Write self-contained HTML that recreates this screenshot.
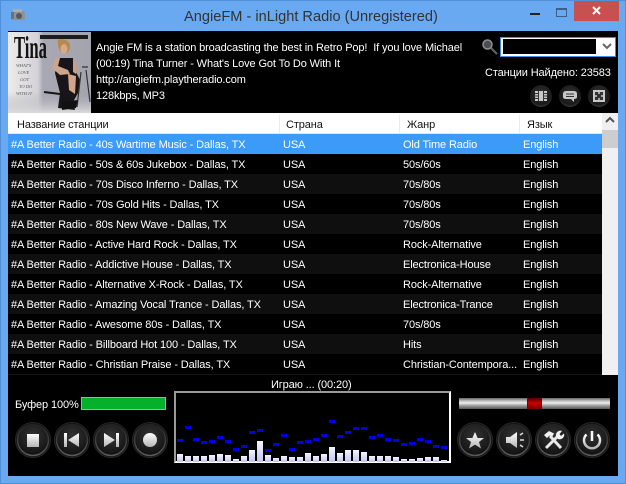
<!DOCTYPE html>
<html><head><meta charset="utf-8"><style>
html,body{margin:0;padding:0;background:#69a9f2}
body{width:626px;height:484px;position:relative;overflow:hidden;font:11px/16px "Liberation Sans","Noto Sans CJK SC",sans-serif;letter-spacing:-.12px;color:#fff}
.a{position:absolute;white-space:nowrap}
#win{left:0;top:0;width:624px;height:482px;border:1px solid #4f8fd8;background:#69a9f2}
#in{left:8px;top:31px;width:610px;height:445px;background:#000}
.r{position:absolute;left:8px;width:594px;height:20px;line-height:22px;color:#fff}
.r span{position:absolute;top:0;white-space:nowrap}
.r span:nth-child(1){left:3px}.r span:nth-child(2){left:275px}.r span:nth-child(3){left:395px}.r span:nth-child(4){left:515px}
.g{background:#0f0f0f}
.h{top:115px;height:18px;line-height:20px;color:#111}
.s{top:115px;width:1px;height:18px;background:#e3ebf3}
svg{position:absolute;overflow:visible}
</style></head><body>
<div class="a" id="win"></div>
<div class="a" id="in"></div>

<svg style="left:10px;top:8px" width="16" height="14" viewBox="0 0 16 14"><rect x="1" y="3" width="14" height="9" rx="2" fill="#8d9298"/><rect x="3" y="1" width="9" height="3" fill="#a8adb3"/><circle cx="9" cy="8" r="3" fill="#55595e"/><rect x="1" y="4" width="3" height="7" fill="#6d7277"/></svg>
<div class="a" style="left:184px;top:6px;font-size:14.6px;line-height:22px;color:#333;letter-spacing:0">AngieFM - inLight Radio (Unregistered)</div>
<div class="a" style="left:530px;top:13px;width:10px;height:2px;background:#222"></div>
<div class="a" style="left:556px;top:8px;width:9px;height:6px;border:1px solid #3d5f8c;border-top-width:2px"></div>
<div class="a" style="left:574px;top:1px;width:45px;height:20px;background:#c75050"></div>
<svg style="left:591px;top:6px" width="11" height="10"><path d="M2 1L9 8M9 1L2 8" stroke="#fff" stroke-width="2" fill="none"/></svg>

<svg style="left:8px;top:32px" width="83" height="81" viewBox="0 0 83 81">
<defs><linearGradient id="al" x1="0" x2="1"><stop offset="0" stop-color="#ecebea"/><stop offset=".36" stop-color="#d4d2d8"/><stop offset=".42" stop-color="#a9a8b2"/><stop offset="1" stop-color="#a4a4ae"/></linearGradient>
<linearGradient id="al2" x1="0" y1="0" x2="0" y2="1"><stop offset="0" stop-color="#a4a4ae" stop-opacity="0"/><stop offset="1" stop-color="#dcdcdc"/></linearGradient></defs>
<rect width="83" height="81" fill="url(#al)"/>
<rect x="0" y="60" width="83" height="21" fill="url(#al2)"/>
<rect x="32" y="3" width="48" height="4" fill="#1c1c1c"/>
<text x="6" y="26" font-family="Liberation Serif,serif" font-weight="bold" font-size="32" textLength="33" lengthAdjust="spacingAndGlyphs" fill="#111" letter-spacing="0">Tina</text>
<g font-size="4.5" font-family="Liberation Serif,serif" fill="#555" letter-spacing="0" font-style="italic">
<text x="8" y="35">WHAT'S</text><text x="10" y="42">LOVE</text><text x="12" y="49">GOT</text><text x="11" y="56">TO DO</text><text x="8" y="63">WITH IT</text></g>
<path d="M50 8C54 6 62 8 62 14C62 20 58 22 56 22C52 21 49 14 50 8Z" fill="#b58a4e"/>
<ellipse cx="56" cy="17" rx="3.5" ry="5" fill="#d8a888"/>
<path d="M50 26L65 26L68 40L72 48L70 61L65 70L67 78L50 76L52 61L47 41Z" fill="#17151a"/>
<path d="M48 26L44 36L52 43L62 42L60 38L50 34L52 26Z" fill="#cfa48c"/>
<path d="M60 42L68 44L67 62L61 58Z" fill="#d3a58c"/>
<path d="M65 26L70 36L68 42L65 40Z" fill="#c99e86"/>
<path d="M36 60L52 62" stroke="#151515" stroke-width="2"/>
<path d="M74 35L80 35M73 40L69 75M78 38L82 70" stroke="#333" stroke-width="1.2" fill="none"/>
<path d="M54 70L70 68L68 76L54 78Z" fill="#111"/>
</svg>

<div class="a" style="left:96px;top:40px">Angie FM is a station broadcasting the best in Retro Pop!&nbsp; If you love Michael</div>
<div class="a" style="left:96px;top:56px">(00:19) Tina Turner - What's Love Got To Do With It</div>
<div class="a" style="left:96px;top:72px">http://angiefm.playtheradio.com</div>
<div class="a" style="left:96px;top:88px">128kbps, MP3</div>

<svg style="left:481px;top:38px" width="17" height="17"><circle cx="6.5" cy="6.5" r="4.5" fill="#4a4e52" stroke="#8f9295" stroke-width="1.5"/><path d="M10 10L16 16" stroke="#666" stroke-width="2"/></svg>
<div class="a" style="left:500px;top:37px;width:114px;height:18px;border:1px solid #3c8ee0;background:#fff"></div>
<div class="a" style="left:503px;top:39px;width:93px;height:15px;background:#000"></div>
<svg style="left:602px;top:43px" width="10" height="7"><path d="M1 1L5 5L9 1" stroke="#666" stroke-width="2" fill="none"/></svg>
<div class="a" style="left:485px;top:65px">Станции Найдено: 23583</div>

<svg style="left:530px;top:85px" width="22" height="22" viewBox="0 0 22 22"><defs><radialGradient id="sb" cx=".5" cy=".4" r=".6"><stop offset="0" stop-color="#333"/><stop offset=".8" stop-color="#1a1a1a"/><stop offset="1" stop-color="#3a3a3a"/></radialGradient></defs><circle cx="11" cy="11" r="11" fill="url(#sb)"/><rect x="5" y="6" width="12" height="10" fill="#c8c8c8"/><path d="M8.5 6V16M13.5 6V16" stroke="#333" stroke-width="1"/><path d="M5 8.5H8M5 11H8M5 13.5H8M14 8.5H17M14 11H17M14 13.5H17" stroke="#333"/></svg>
<svg style="left:559px;top:85px" width="22" height="22" viewBox="0 0 22 22"><circle cx="11" cy="11" r="11" fill="url(#sb)"/><path d="M7 6H15Q18 6 18 9V12Q18 14 15 14V17L12 14H7Q4 14 4 12V9Q4 6 7 6Z" fill="#c8c8c8"/><path d="M7 9H15M7 11.5H15" stroke="#333"/></svg>
<svg style="left:588px;top:85px" width="22" height="22" viewBox="0 0 22 22"><circle cx="11" cy="11" r="11" fill="url(#sb)"/><rect x="5" y="5" width="12" height="12" fill="#c8c8c8"/><rect x="7" y="7" width="8" height="8" fill="#333"/><path d="M11 6V9M11 13V16M6 11H9M13 11H16" stroke="#c8c8c8" stroke-width="1.5"/></svg>

<div class="a" style="left:8px;top:113px;width:610px;height:21px;background:#fff"></div>
<div class="a h" style="left:17px">Название станции</div>
<div class="a s" style="left:279px"></div>
<div class="a h" style="left:286px">Страна</div>
<div class="a s" style="left:399px"></div>
<div class="a h" style="left:407px">Жанр</div>
<div class="a s" style="left:519px"></div>
<div class="a h" style="left:527px">Язык</div>
<div class="a" style="left:8px;top:133px;width:594px;height:1px;background:#dfe8f2"></div>

<div class="a" style="left:602px;top:113px;width:16px;height:262px;background:#f0f0f0"></div>
<svg style="left:605px;top:117px" width="10" height="7"><path d="M1 5L5 1L9 5" stroke="#555" stroke-width="2" fill="none"/></svg>
<div class="a" style="left:602px;top:130px;width:16px;height:18px;background:#cdcdcd"></div>

<div class="r" style="top:134px;background:#3c9bf8"><span>#A Better Radio - 40s Wartime Music - Dallas, TX</span><span>USA</span><span>Old Time Radio</span><span>English</span></div>
<div class="r" style="top:154px"><span>#A Better Radio - 50s &amp; 60s Jukebox - Dallas, TX</span><span>USA</span><span>50s/60s</span><span>English</span></div>
<div class="r g" style="top:174px"><span>#A Better Radio - 70s Disco Inferno - Dallas, TX</span><span>USA</span><span>70s/80s</span><span>English</span></div>
<div class="r" style="top:194px"><span>#A Better Radio - 70s Gold Hits - Dallas, TX</span><span>USA</span><span>70s/80s</span><span>English</span></div>
<div class="r g" style="top:214px"><span>#A Better Radio - 80s New Wave - Dallas, TX</span><span>USA</span><span>70s/80s</span><span>English</span></div>
<div class="r" style="top:234px"><span>#A Better Radio - Active Hard Rock - Dallas, TX</span><span>USA</span><span>Rock-Alternative</span><span>English</span></div>
<div class="r g" style="top:254px"><span>#A Better Radio - Addictive House - Dallas, TX</span><span>USA</span><span>Electronica-House</span><span>English</span></div>
<div class="r" style="top:274px"><span>#A Better Radio - Alternative X-Rock - Dallas, TX</span><span>USA</span><span>Rock-Alternative</span><span>English</span></div>
<div class="r g" style="top:294px"><span>#A Better Radio - Amazing Vocal Trance - Dallas, TX</span><span>USA</span><span>Electronica-Trance</span><span>English</span></div>
<div class="r" style="top:314px"><span>#A Better Radio - Awesome 80s - Dallas, TX</span><span>USA</span><span>70s/80s</span><span>English</span></div>
<div class="r g" style="top:334px"><span>#A Better Radio - Billboard Hot 100 - Dallas, TX</span><span>USA</span><span>Hits</span><span>English</span></div>
<div class="r" style="top:354px"><span>#A Better Radio - Christian Praise - Dallas, TX</span><span>USA</span><span>Christian-Contempora...</span><span>English</span></div>
<div class="a" style="left:8px;top:374px;width:594px;height:1px;background:#161616"></div>

<div class="a" style="left:271px;top:377px">Играю ... (00:20)</div>
<div class="a" style="left:15px;top:397px">Буфер 100%</div>
<div class="a" style="left:81px;top:397px;width:83px;height:11px;border:1px solid #aaa;background:#05b02a"></div>

<div class="a" style="left:174px;top:391px;width:273px;height:68px;border:2px solid;border-color:#999 #fff #fff #999;background:#000"></div>
<svg style="left:0;top:0" width="626" height="484" shape-rendering="crispEdges">
<defs><linearGradient id="b" x1="0" y1="0" x2="0" y2="1"><stop offset="0" stop-color="#f4f4ff"/><stop offset="1" stop-color="#c4c4f0"/></linearGradient></defs>
<g fill="url(#b)">
<rect x="177" y="454" width="6" height="8"/><rect x="185" y="456" width="6" height="6"/><rect x="193" y="456" width="6" height="6"/><rect x="201" y="456" width="6" height="6"/><rect x="209" y="455" width="6" height="7"/><rect x="217" y="454" width="6" height="8"/><rect x="225" y="455" width="6" height="7"/><rect x="233" y="459" width="6" height="3"/><rect x="241" y="456" width="6" height="6"/><rect x="249" y="450" width="6" height="12"/><rect x="257" y="441" width="6" height="21"/><rect x="265" y="455" width="6" height="7"/><rect x="273" y="458" width="6" height="4"/><rect x="281" y="456" width="6" height="6"/><rect x="289" y="457" width="6" height="5"/><rect x="297" y="457" width="6" height="5"/><rect x="305" y="453" width="6" height="9"/><rect x="313" y="456" width="6" height="6"/><rect x="321" y="454" width="6" height="8"/><rect x="329" y="447" width="6" height="15"/><rect x="337" y="453" width="6" height="9"/><rect x="345" y="450" width="6" height="12"/><rect x="353" y="450" width="6" height="12"/><rect x="361" y="452" width="6" height="10"/><rect x="369" y="456" width="6" height="6"/><rect x="377" y="456" width="6" height="6"/><rect x="385" y="456" width="6" height="6"/><rect x="393" y="457" width="6" height="5"/><rect x="401" y="459" width="6" height="3"/><rect x="409" y="459" width="6" height="3"/><rect x="417" y="458" width="6" height="4"/><rect x="425" y="457" width="6" height="5"/><rect x="433" y="457" width="6" height="5"/><rect x="441" y="460" width="6" height="2"/>
</g>
<g fill="#0000e6">
<rect x="177" y="439" width="6" height="3"/><rect x="185" y="426" width="6" height="3"/><rect x="193" y="438" width="6" height="3"/><rect x="201" y="441" width="6" height="3"/><rect x="209" y="440" width="6" height="3"/><rect x="217" y="436" width="6" height="3"/><rect x="225" y="440" width="6" height="3"/><rect x="233" y="448" width="6" height="3"/><rect x="241" y="445" width="6" height="3"/><rect x="249" y="431" width="6" height="3"/><rect x="257" y="429" width="6" height="3"/><rect x="265" y="449" width="6" height="3"/><rect x="273" y="443" width="6" height="3"/><rect x="281" y="434" width="6" height="3"/><rect x="289" y="448" width="6" height="3"/><rect x="297" y="441" width="6" height="3"/><rect x="305" y="440" width="6" height="3"/><rect x="313" y="438" width="6" height="3"/><rect x="321" y="434" width="6" height="3"/><rect x="329" y="420" width="6" height="3"/><rect x="337" y="435" width="6" height="3"/><rect x="345" y="431" width="6" height="3"/><rect x="353" y="427" width="6" height="3"/><rect x="361" y="427" width="6" height="3"/><rect x="369" y="436" width="6" height="3"/><rect x="377" y="434" width="6" height="3"/><rect x="385" y="438" width="6" height="3"/><rect x="393" y="439" width="6" height="3"/><rect x="401" y="443" width="6" height="3"/><rect x="409" y="442" width="6" height="3"/><rect x="417" y="438" width="6" height="3"/><rect x="425" y="440" width="6" height="3"/><rect x="433" y="445" width="6" height="3"/><rect x="441" y="446" width="6" height="3"/>
</g>
</svg>

<div class="a" style="left:459px;top:398px;width:151px;height:11px;background:linear-gradient(#666,#bbb 25%,#eee 45%,#aaa 65%,#555)"></div>
<div class="a" style="left:527px;top:398px;width:15px;height:11px;background:linear-gradient(#500,#c00 45%,#700);border-left:1px solid #222;border-right:1px solid #222;box-sizing:border-box"></div>

<svg style="left:0;top:0" width="626" height="484">
<defs>
<radialGradient id="rb" cx=".5" cy=".35" r=".7"><stop offset="0" stop-color="#333"/><stop offset=".65" stop-color="#1c1c1c"/><stop offset="1" stop-color="#0c0c0c"/></radialGradient>
<linearGradient id="ring" x1="0" y1="0" x2="0" y2="1"><stop offset="0" stop-color="#222"/><stop offset="1" stop-color="#5a5a5a"/></linearGradient>
<linearGradient id="ic" x1="0" y1="0" x2="0" y2="1"><stop offset="0" stop-color="#fff"/><stop offset="1" stop-color="#b5b5b5"/></linearGradient>
<g id="btn"><circle r="17.5" fill="#111" stroke="#262626"/><circle r="15.5" fill="url(#rb)" stroke="url(#ring)" stroke-width="1.5"/></g>
</defs>
<use href="#btn" x="33" y="440"/><use href="#btn" x="72" y="440"/><use href="#btn" x="111" y="440"/><use href="#btn" x="150" y="440"/>
<use href="#btn" x="475" y="440"/><use href="#btn" x="514" y="440"/><use href="#btn" x="553" y="440"/><use href="#btn" x="592" y="440"/>
<rect x="27" y="434" width="12" height="13" fill="url(#ic)"/>
<path d="M64 433H67V447H64ZM79 433V447L68 440Z" fill="url(#ic)"/>
<path d="M119 433H116V447H119ZM104 433V447L115 440Z" fill="url(#ic)"/>
<circle cx="150" cy="440" r="7" fill="url(#ic)"/>
<path d="M475 432L477.6 438H484L479 442L481 448.5L475 444.6L469 448.5L471 442L466 438H472.4Z" fill="url(#ic)"/>
<path d="M506 437H510L517 432V448L510 443H506Z" fill="url(#ic)"/>
<path d="M520 435L523 433M520 440H524M520 445L523 447" stroke="#ddd" stroke-width="1.5"/>
<path d="M544 435L549 431L554 433.5L552 437L549.5 435.5L547 438Z" fill="#f2f2f2"/>
<path d="M550 436L561 448" stroke="#e8e8e8" stroke-width="3"/>
<path d="M557 437L546 448" stroke="#e8e8e8" stroke-width="3"/>
<path d="M556 436A4.5 4.5 0 0 1 562 431L559.5 434L561 436L564 433.5A4.5 4.5 0 0 1 558 439Z" fill="#f2f2f2"/>
<path d="M586.5 434.5A8 8 0 1 0 597.5 434.5" stroke="url(#ic)" stroke-width="2.5" fill="none"/>
<path d="M592 431V441" stroke="#fff" stroke-width="2.5"/>
</svg>
</body></html>
